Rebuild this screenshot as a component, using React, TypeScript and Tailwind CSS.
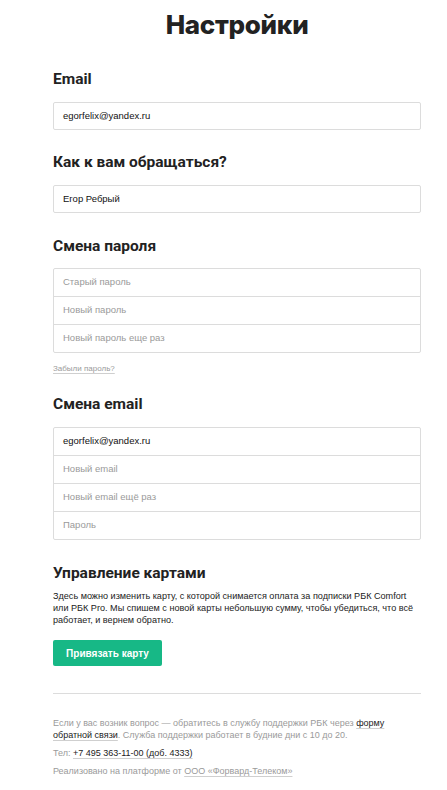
import React from 'react';

const body = "font-['Liberation_Sans',Arial,sans-serif]";
const head = "font-['Roboto','Inter',sans-serif]";
const link = 'underline decoration-[#cfcfcf] underline-offset-[2px]';

function Heading({ children, className = '' }: { children: React.ReactNode; className?: string }) {
  return (
    <h2 className={`${head} text-[15.5px] leading-[20px] font-bold text-[#222] ${className}`}>
      {children}
    </h2>
  );
}

function Field({ value, placeholder, last, single }: { value?: string; placeholder?: string; last?: boolean; single?: boolean }) {
  return (
    <div
      className={`${single ? 'h-[26px]' : 'h-[27px]'} box-content flex items-center pl-[9px] text-[9.5px] ${body} ${
        last ? '' : 'border-b border-[#dcdcdc]'
      } ${value ? 'text-[#111]' : 'text-[#9a9a9a]'}`}
    >
      {value ?? placeholder}
    </div>
  );
}

function Group({ children }: { children: React.ReactNode }) {
  return <div className="border border-[#dcdcdc] rounded-[2px] bg-white">{children}</div>;
}

export default function App() {
  return (
    <div className="w-[447px] min-h-[790px] bg-white">
      <div className="w-[368px] ml-[53px] pt-[9px]">
        <h1 className="font-['Inter',sans-serif] text-center text-[26px] leading-[32px] font-extrabold text-[#222] tracking-[-0.3px]">
          Настройки
        </h1>

        <Heading className="mt-[28px]">Email</Heading>
        <div className="mt-[13px]">
          <Group>
            <Field value="egorfelix@yandex.ru" last single />
          </Group>
        </div>

        <Heading className="mt-[22px]">Как к вам обращаться?</Heading>
        <div className="mt-[13px]">
          <Group>
            <Field value="Егор Ребрый" last single />
          </Group>
        </div>

        <Heading className="mt-[23px]">Смена пароля</Heading>
        <div className="mt-[12px]">
          <Group>
            <Field placeholder="Старый пароль" />
            <Field placeholder="Новый пароль" />
            <Field placeholder="Новый пароль еще раз" last />
          </Group>
        </div>
        <div className="mt-[6px] leading-[12px]">
          <a className={`${body} ${link} text-[8px] text-[#9a9a9a]`}>Забыли пароль?</a>
        </div>

        <Heading className="mt-[19px]">Смена email</Heading>
        <div className="mt-[13px]">
          <Group>
            <Field value="egorfelix@yandex.ru" />
            <Field placeholder="Новый email" />
            <Field placeholder="Новый email ещё раз" />
            <Field placeholder="Пароль" last />
          </Group>
        </div>

        <Heading className="mt-[23px]">Управление картами</Heading>
        <p className={`${body} mt-[7px] text-[9.1px] leading-[12px] text-[#222]`}>
          Здесь можно изменить карту, с которой снимается оплата за подписки РБК Comfort
          <br />
          или РБК Pro. Мы спишем с новой карты небольшую сумму, чтобы убедиться, что всё
          <br />
          работает, и вернем обратно.
        </p>
        <button
          className={`${body} mt-[14px] w-[109px] h-[26px] rounded-[2px] bg-[#17b886] text-white text-[10px] font-bold`}
        >
          Привязать карту
        </button>

        <div className="mt-[27px] border-t border-[#dcdcdc]" />

        <div className={`${body} mt-[24px] text-[9px] text-[#9a9a9a]`}>
          <p className="leading-[11.5px]">
            Если у вас возник вопрос — обратитесь в службу поддержки РБК через{' '}
            <a className={`${link} text-[#222]`}>форму</a>
            <br />
            <a className={`${link} text-[#222]`}>обратной связи</a>. Служба поддержки работает в будние дни с 10 до 20.
          </p>
          <p className="mt-[6px] leading-[12px]">
            Тел: <a className={`${link} text-[#222]`}>+7 495 363-11-00 (доб. 4333)</a>
          </p>
          <p className="mt-[6px] leading-[12px]">
            Реализовано на платформе от <a className={link}>ООО «Форвард-Телеком»</a>
          </p>
        </div>
      </div>
    </div>
  );
}
